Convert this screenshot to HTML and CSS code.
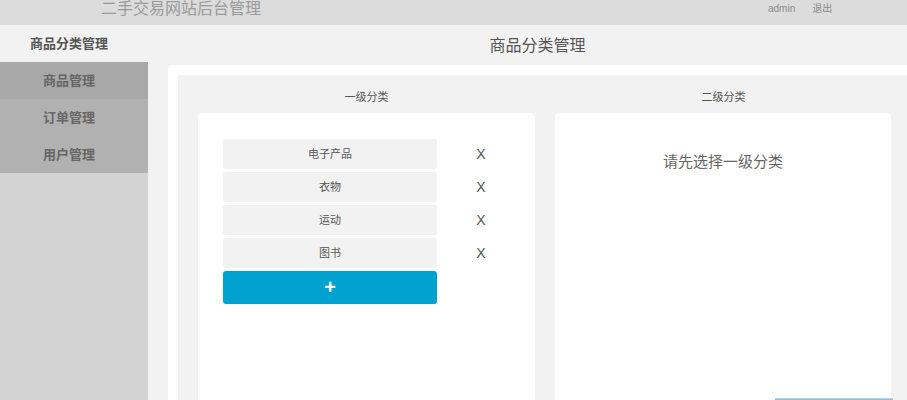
FILE: index.html
```html
<!DOCTYPE html>
<html lang="zh-CN">
  <head>
    <meta charset="UTF-8" />
    <meta name="viewport" content="width=device-width, initial-scale=1.0" />
    <title>二手交易网站后台管理</title>
    <link rel="stylesheet" href="styles.css">
  </head>
  <body>
    <div class="header">
      <div class="site-title">二手交易网站后台管理</div>
      <div class="user-bar">
        <a href="#">admin</a>
        <a href="#">退出</a>
      </div>
    </div>
    <div class="layout">
      <div class="sidebar">
        <div class="sidebar-title">商品分类管理</div>
        <a href="#" class="nav-item active">商品管理</a>
        <a href="#" class="nav-item">订单管理</a>
        <a href="#" class="nav-item">用户管理</a>
      </div>
      <div class="main">
        <div class="page-title">商品分类管理</div>
        <div class="wrapper">
          <div class="panel">
            <div class="column">
              <div class="column-label">一级分类</div>
              <div class="card">
                <div class="cat-row">
                  <div class="cat-name">电子产品</div>
                  <span class="cat-del">X</span>
                </div>
                <div class="cat-row">
                  <div class="cat-name">衣物</div>
                  <span class="cat-del">X</span>
                </div>
                <div class="cat-row">
                  <div class="cat-name">运动</div>
                  <span class="cat-del">X</span>
                </div>
                <div class="cat-row">
                  <div class="cat-name">图书</div>
                  <span class="cat-del">X</span>
                </div>
                <button class="add-btn">+</button>
              </div>
            </div>
            <div class="column">
              <div class="column-label">二级分类</div>
              <div class="card card-right">
                <p class="hint">请先选择一级分类</p>
                <div class="bottom-btn"></div>
              </div>
            </div>
          </div>
        </div>
      </div>
    </div>
  </body>
</html>
```

FILE: styles.css
```css
body {
  margin: 0;
  height: 400px;
  overflow: hidden;
  background-color: #f2f2f2;
  font-family: "Liberation Sans", "Noto Sans CJK SC", sans-serif;
  color: #555;
}
a {
  text-decoration: none;
}
.header {
  height: 25px;
  background-color: #dcdcdc;
  display: flex;
  align-items: flex-start;
}
.site-title {
  padding-left: 101px;
  font-size: 16px;
  line-height: 18px;
  color: #9a9a9a;
  width: 768px;
  box-sizing: border-box;
}
.user-bar {
  display: flex;
  gap: 17px;
  font-size: 10px;
  line-height: 18px;
}
.user-bar a {
  color: #8a8a8a;
}
.layout {
  display: flex;
  height: 375px;
}
.sidebar {
  width: 148px;
  flex-shrink: 0;
  background-color: #d3d3d3;
}
.sidebar-title {
  height: 37px;
  line-height: 37px;
  background-color: #f2f2f2;
  text-align: center;
  padding-right: 10px;
  font-size: 13px;
  font-weight: bold;
  color: #555;
}
.nav-item {
  display: block;
  height: 37px;
  line-height: 37px;
  text-align: center;
  padding-right: 10px;
  background-color: #b1b1b1;
  font-size: 13px;
  font-weight: bold;
  color: #666;
}
.nav-item.active {
  background-color: #a8a8a8;
}
.main {
  flex: 1;
  padding-left: 20px;
  min-width: 0;
}
.page-title {
  height: 40px;
  line-height: 42px;
  text-align: center;
  font-size: 16px;
  color: #555;
}
.wrapper {
  background-color: white;
  border-radius: 4px 0 0 0;
  padding: 10px 0 0 10px;
  height: 325px;
}
.panel {
  display: flex;
  gap: 20px;
  padding: 0 20px;
  background-color: #f2f2f2;
  height: 100%;
}
.column {
  width: 337px;
  flex-shrink: 0;
}
.column-label {
  height: 38px;
  line-height: 44px;
  text-align: center;
  font-size: 11px;
  color: #555;
}
.card {
  background-color: white;
  border-radius: 4px;
  height: 300px;
  padding: 26px 0 0 25px;
  box-sizing: border-box;
  position: relative;
}
.cat-row {
  display: flex;
  align-items: center;
  margin-bottom: 3px;
}
.cat-name {
  width: 214px;
  height: 30px;
  line-height: 30px;
  background-color: #f2f2f2;
  border-radius: 3px;
  text-align: center;
  font-size: 11px;
  color: #555;
}
.cat-del {
  width: 88px;
  text-align: center;
  font-size: 14px;
  color: #555;
}
.add-btn {
  display: block;
  width: 214px;
  height: 33px;
  border: none;
  border-radius: 3px;
  background-color: #00a2cf;
  color: white;
  font-size: 20px;
  font-weight: bold;
  font-family: "Liberation Sans", sans-serif;
  line-height: 33px;
  padding: 0;
}
.card-right {
  padding: 0;
  width: 336px;
}
.hint {
  margin: 0;
  padding-top: 37px;
  text-align: center;
  font-size: 15px;
  color: #666;
}
.bottom-btn {
  position: absolute;
  left: 220px;
  top: 285px;
  width: 118px;
  height: 10px;
  background-color: #8fbde3;
  border-top: 1px solid #b5d4ee;
}
```
